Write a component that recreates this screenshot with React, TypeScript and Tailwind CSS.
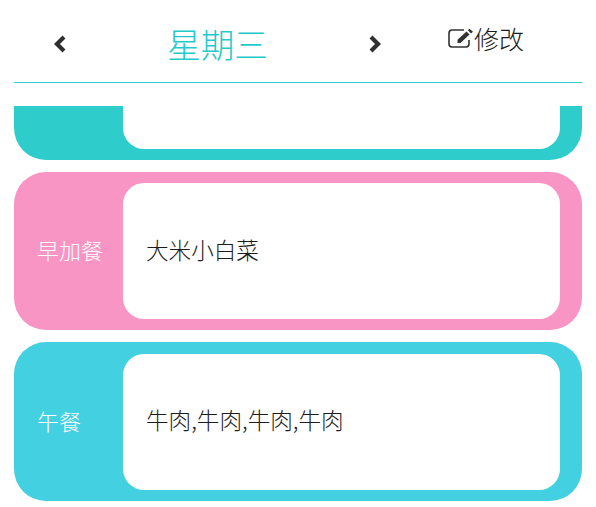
const font = { fontFamily: '"Noto Sans CJK SC", sans-serif' };

function Chevron({ flip }: { flip?: boolean }) {
    return (
        <svg width="15" height="20" viewBox="0 0 15 20" className={flip ? "rotate-180" : ""}>
            <path d="M12 3 5 10l7 7" fill="none" stroke="#2f2f2f" strokeWidth="4.2" />
        </svg>
    );
}

function EditIcon() {
    return (
        <svg width="25" height="20" viewBox="0 0 25 20">
            <path
                d="M16 2H4A3.2 3.2 0 0 0 1 5.2v10.6A3.2 3.2 0 0 0 4 19h14a3.2 3.2 0 0 0 3-3.2V12"
                fill="none"
                stroke="#333333"
                strokeWidth="1.6"
            />
            <path d="M9.5 11.8 18.5 3.6l3 3-9 8.4H9.5z" fill="#333333" />
            <path d="M19.8 2.2 21.5 0.8 25 3.8 23 5.5z" fill="#333333" />
        </svg>
    );
}

function MealCard({ label, food, color, tall }: { label: string; food: string; color: string; tall?: boolean }) {
    return (
        <div className={`flex items-center rounded-[32px] pr-[22px] ${tall ? "h-[159px]" : "h-[158px]"} ${color}`}>
            <div className="w-[109px] pb-[3px] pl-[23px] text-[22px] font-light text-white">{label}</div>
            <div className="flex h-[136px] flex-1 items-center rounded-[21px] bg-white pb-[3px] pl-[23px] text-[22.6px] font-light text-[#1c1c1c]">
                {food}
            </div>
        </div>
    );
}

export default function App() {
    return (
        <div style={font} className="h-[507px] w-[596px] overflow-hidden bg-white px-[14px]">
            {/* Header */}
            <div className="flex h-[83px] items-center border-b border-[#2ed0d0]">
                <div className="flex w-[91px] justify-center pt-[5px]">
                    <Chevron />
                </div>
                <div className="w-[225px] pt-[5px] text-center text-[33.6px] leading-none font-light text-[#1fcaca]">
                    星期三
                </div>
                <div className="flex w-[91px] justify-center pt-[5px]">
                    <Chevron flip />
                </div>
                <div className="flex items-center gap-[1px] pb-[6px] pl-[27px] text-[25px] leading-none font-light text-[#1c1c1c]">
                    <EditIcon />
                    修改
                </div>
            </div>

            {/* Meal list, first card is scrolled partly out of view */}
            <div className="mt-[23px] flex flex-col gap-[12px]">
                <div className="flex h-[54px] rounded-b-[32px] bg-[#2fcccc] pr-[22px] pl-[109px]">
                    <div className="h-[43px] flex-1 rounded-b-[21px] bg-white" />
                </div>
                <MealCard label="早加餐" food="大米小白菜" color="bg-[#f895c4]" />
                <MealCard label="午餐" food="牛肉,牛肉,牛肉,牛肉" color="bg-[#43d0e0]" tall />
            </div>
        </div>
    );
}
